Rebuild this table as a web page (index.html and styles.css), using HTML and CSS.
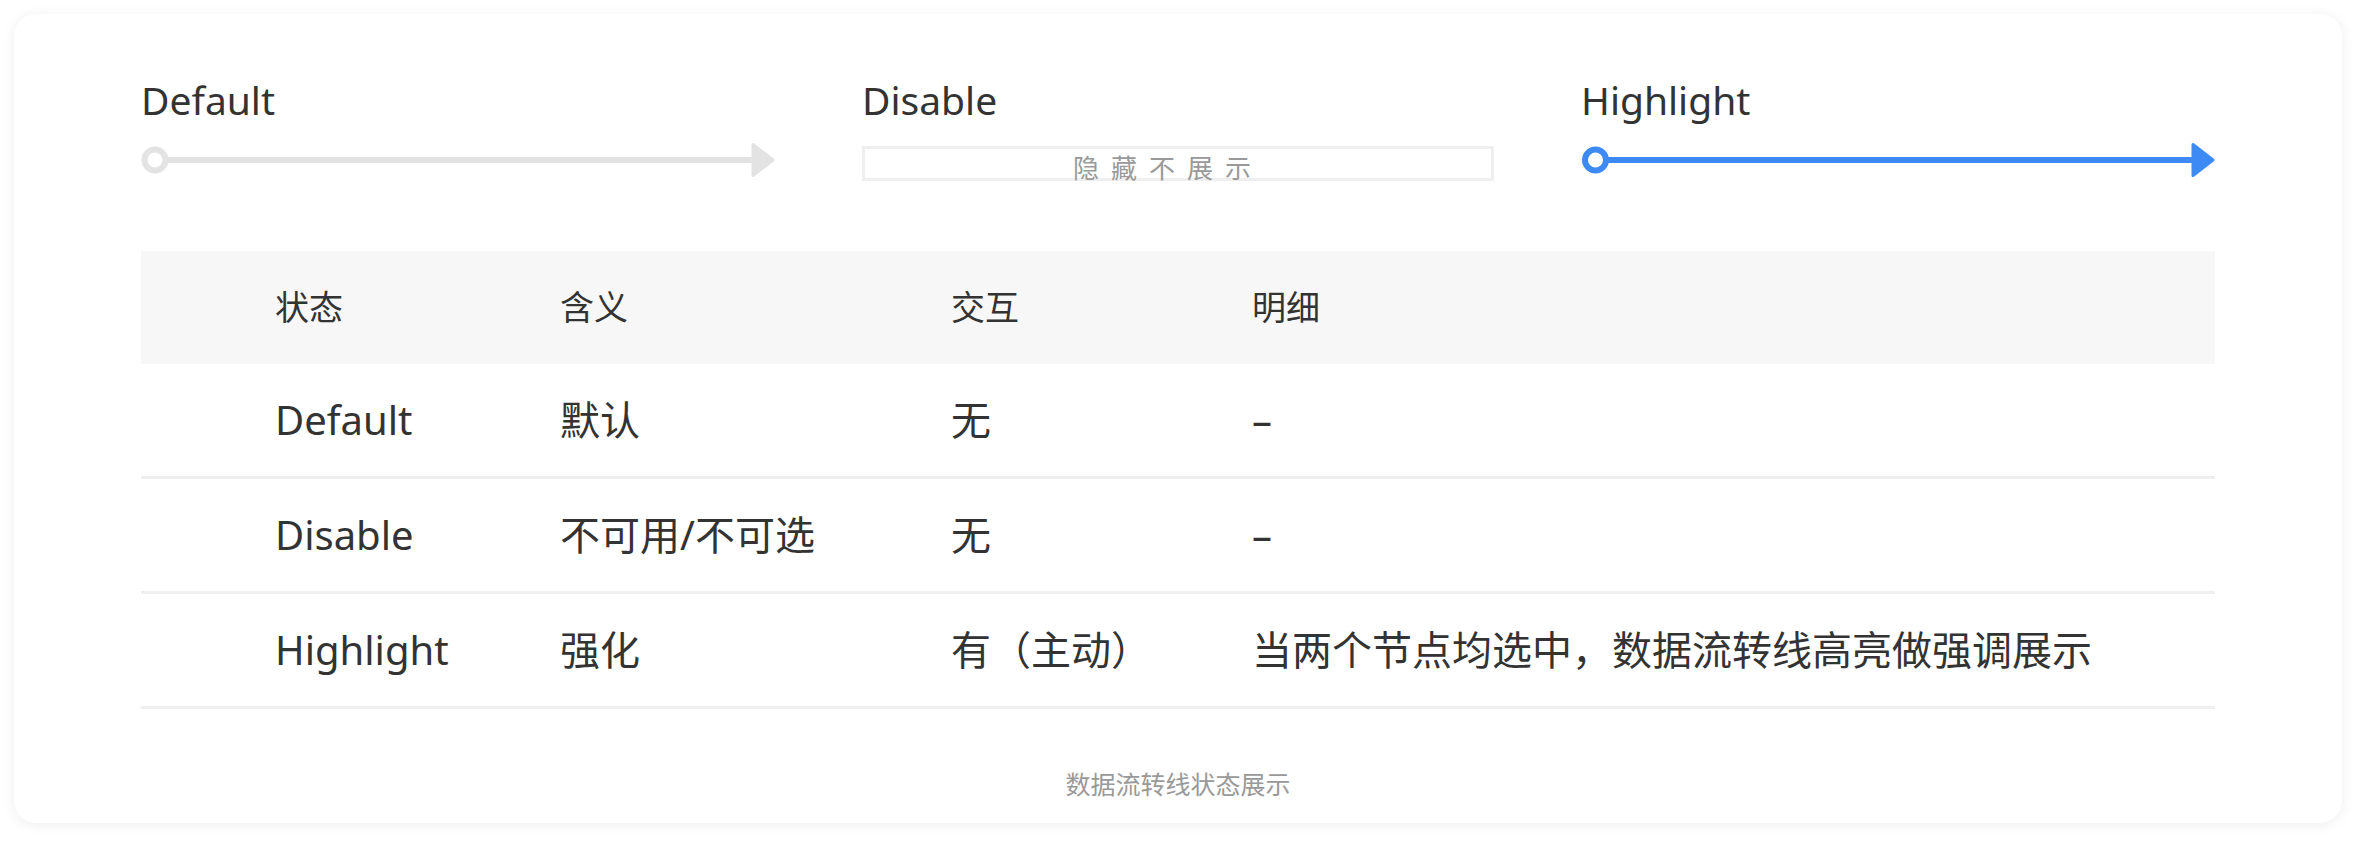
FILE: index.html
```html
<!DOCTYPE html>
<html lang="zh-CN">
<head>
<meta charset="utf-8">
<title>数据流转线状态展示</title>
<link rel="stylesheet" href="styles.css">
</head>
<body>
<div class="card">
  <div class="states">
    <div class="state">
      <div class="state-title">Default</div>
      <svg class="flow" viewBox="0 0 634 34" width="634" height="34">
        <line x1="24" y1="17" x2="613" y2="17" stroke="#e3e3e3" stroke-width="6"/>
        <circle cx="14" cy="17" r="10.5" fill="#fff" stroke="#e3e3e3" stroke-width="6"/>
        <polygon points="612,1.5 632,17 612,32.5" fill="#e3e3e3" stroke="#e3e3e3" stroke-width="3" stroke-linejoin="round"/>
      </svg>
    </div>
    <div class="state">
      <div class="state-title">Disable</div>
      <div class="hidden-box">隐藏不展示</div>
    </div>
    <div class="state">
      <div class="state-title">Highlight</div>
      <svg class="flow" viewBox="0 0 634 34" width="634" height="34">
        <line x1="24" y1="17" x2="613" y2="17" stroke="#3d8af5" stroke-width="6"/>
        <circle cx="14.5" cy="17" r="10.5" fill="#fff" stroke="#3d8af5" stroke-width="6"/>
        <polygon points="612,1.5 632,17 612,32.5" fill="#3d8af5" stroke="#3d8af5" stroke-width="3" stroke-linejoin="round"/>
      </svg>
    </div>
  </div>

  <div class="table">
    <div class="row head">
      <div>状态</div><div>含义</div><div>交互</div><div>明细</div>
    </div>
    <div class="row">
      <div>Default</div><div>默认</div><div>无</div><div>–</div>
    </div>
    <div class="row">
      <div>Disable</div><div>不可用/不可选</div><div>无</div><div>–</div>
    </div>
    <div class="row">
      <div>Highlight</div><div>强化</div><div>有（主动）</div><div>当两个节点均选中，数据流转线高亮做强调展示</div>
    </div>
  </div>

  <div class="caption">数据流转线状态展示</div>
</div>
</body>
</html>
```
FILE: styles.css
```css
* { box-sizing: border-box; }
html, body { margin: 0; background: #ffffff; }
body {
  padding: 14px;
  font-family: "Noto Sans", "Noto Sans CJK SC", sans-serif;
  color: #333333;
}
.card {
  width: 2328px;
  height: 809px;
  background: #ffffff;
  border-radius: 22px;
  box-shadow: 0 2px 14px rgba(0, 0, 0, 0.07);
  padding: 62px 127px 21px;
}
.states {
  display: grid;
  grid-template-columns: repeat(3, 1fr);
  column-gap: 87px;
}
.state {
  display: flex;
  flex-direction: column;
  align-items: flex-start;
}
.state-title {
  font-size: 39px;
  line-height: 47px;
  height: 47px;
  color: #333;
}
.flow {
  display: block;
  margin-top: 20px;
  overflow: visible;
}
.hidden-box {
  margin-top: 23px;
  width: 100%;
  height: 35px;
  border: 3px solid #efefef;
  font-family: "Noto Sans CJK SC", sans-serif;
  font-size: 26px;
  line-height: 36px;
  letter-spacing: 12px;
  color: #999999;
  text-align: center;
  padding-right: 20px;
  overflow: visible;
  white-space: nowrap;
}
.table {
  margin-top: 70px;
}
.row {
  display: grid;
  grid-template-columns: 285px 391px 301px 1fr;
  padding-left: 134px;
  align-items: center;
  height: 115px;
  border-bottom: 3px solid #efefef;
  font-size: 40px;
  line-height: 1.2;
  white-space: nowrap;
}
.row.head {
  height: 113px;
  background: #f7f7f7;
  border-bottom: none;
  font-size: 34px;
}
.caption {
  margin-top: 57px;
  text-align: center;
  font-size: 25px;
  line-height: 36px;
  color: #999999;
}
```
